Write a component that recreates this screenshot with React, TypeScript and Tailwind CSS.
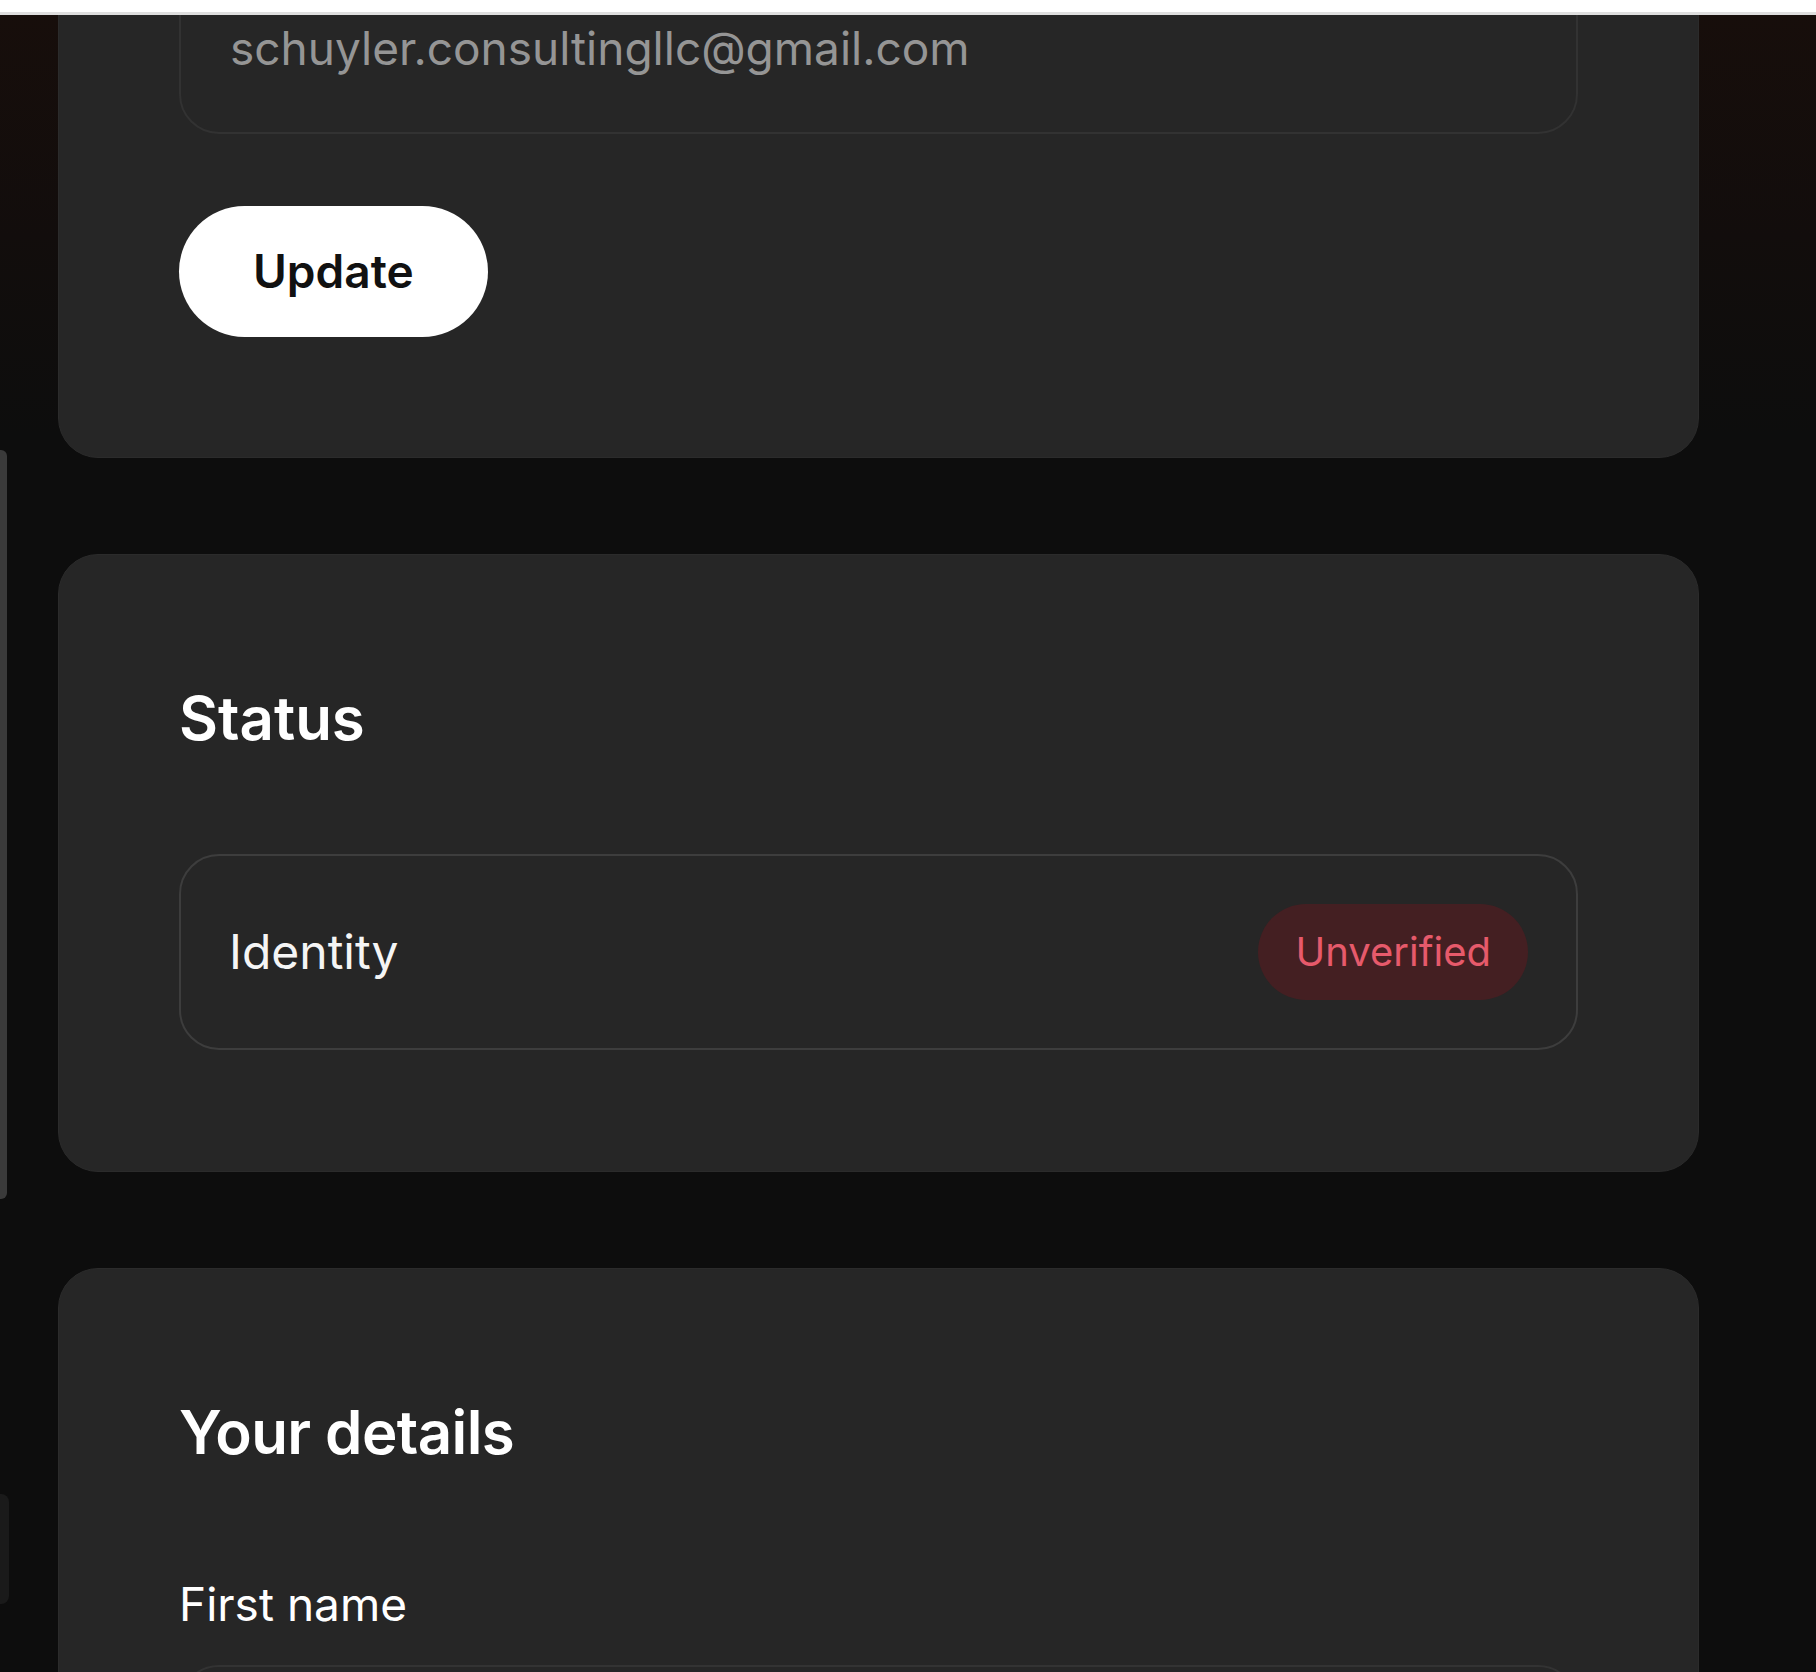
import React from "react";

const Card = ({ children, className = "" }) => (
  <section
    className={`rounded-[40px] border border-[#2b2b2b] bg-[#262626] px-[120px] ${className}`}
  >
    {children}
  </section>
);

const StatusRow = ({ label, status }) => (
  <div className="flex items-center justify-between rounded-[40px] border-2 border-[#3d3d3d] px-[48px] py-[48px]">
    <span className="text-[48px] leading-[72px] text-[#f5f5f5]">{label}</span>
    <span className="flex h-[96px] items-center rounded-full bg-[#441f22] px-[37px] text-[40px] text-[#e65a6b]">
      {status}
    </span>
  </div>
);

export default function App() {
  return (
    <div className="flex h-[1672px] w-[1816px] flex-col overflow-hidden bg-[#0d0d0d] font-['Inter',sans-serif]">
      {/* browser chrome edge */}
      <div className="h-[12px] bg-white" />
      <div className="h-[3px] bg-[#dedede]" />

      <div className="flex flex-1 overflow-hidden bg-[linear-gradient(to_bottom,#170e0b_0px,#120d0c_220px,#0d0d0d_420px)]">
        {/* sidebar peeking in from the left */}
        <aside className="flex w-[58px] shrink-0 flex-col">
          <div className="mt-[435px] h-[749px] w-[7px] rounded-r-[6px] bg-[#3a3a3a]" />
          <div className="mt-[295px] h-[110px] w-[9px] rounded-r-[8px] bg-[#1a1a1a]" />
        </aside>

        <main className="flex w-[1641px] shrink-0 flex-col gap-[96px]">
          <Card className="-mt-[174px] pt-[120px] pb-[120px]">
            <div className="rounded-[40px] border-2 border-[#323232] px-[49px] py-[48px]">
              <span className="block text-[46px] leading-[72px] text-[#959595]">
                schuyler.consultingllc@gmail.com
              </span>
            </div>
            <button className="mt-[72px] flex h-[131px] items-center rounded-full bg-white px-[74px] text-[46px] font-semibold text-[#111]">
              Update
            </button>
          </Card>

          <Card className="pt-[127px] pb-[121px]">
            <h2 className="text-[60px] font-semibold leading-[72px] text-white">Status</h2>
            <div className="mt-[100px]">
              <StatusRow label="Identity" status="Unverified" />
            </div>
          </Card>

          <Card className="pt-[127px] pb-[120px]">
            <h2 className="text-[60px] font-semibold leading-[72px] tracking-[-0.01em] text-white">
              Your details
            </h2>
            <label className="mt-[102px] block text-[46px] leading-[69px] text-white">First name</label>
            <div className="mt-[26px] h-[172px] rounded-[40px] border-2 border-[#333]" />
          </Card>
        </main>
      </div>
    </div>
  );
}
